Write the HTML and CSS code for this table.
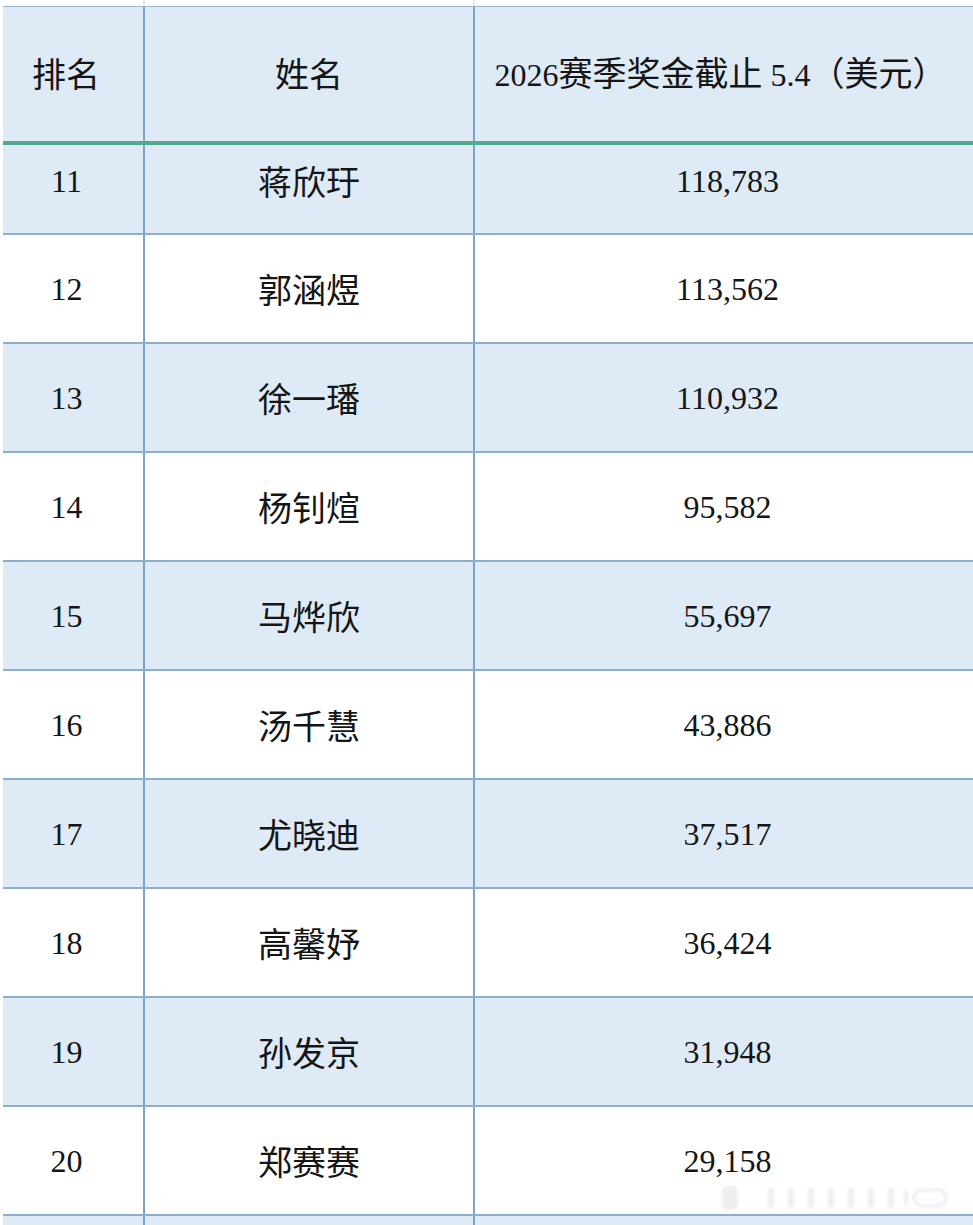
FILE: index.html
```html
<!DOCTYPE html>
<html lang="zh">
<head>
<meta charset="utf-8">
<title>2026赛季奖金</title>
<link rel="stylesheet" href="styles.css">
</head>
<body>
<div class="sheet">
  <div class="row strip"><div class="c c1"></div><div class="c c2"></div><div class="c c3"></div></div>
  <div class="row head">
    <div class="c c1"><span class="zh">排名</span></div>
    <div class="c c2"><span class="zh">姓名</span></div>
    <div class="c c3"><span>2026<span class="zh">赛季奖金截止</span> 5.4<span class="zh">（美元）</span></span></div>
  </div>
  <div class="row band first"><div class="c c1">11</div><div class="c c2 zh">蒋欣玗</div><div class="c c3">118,783</div></div>
  <div class="row"><div class="c c1">12</div><div class="c c2 zh">郭涵煜</div><div class="c c3">113,562</div></div>
  <div class="row band"><div class="c c1">13</div><div class="c c2 zh">徐一璠</div><div class="c c3">110,932</div></div>
  <div class="row"><div class="c c1">14</div><div class="c c2 zh">杨钊煊</div><div class="c c3">95,582</div></div>
  <div class="row band"><div class="c c1">15</div><div class="c c2 zh">马烨欣</div><div class="c c3">55,697</div></div>
  <div class="row"><div class="c c1">16</div><div class="c c2 zh">汤千慧</div><div class="c c3">43,886</div></div>
  <div class="row band"><div class="c c1">17</div><div class="c c2 zh">尤晓迪</div><div class="c c3">37,517</div></div>
  <div class="row"><div class="c c1">18</div><div class="c c2 zh">高馨妤</div><div class="c c3">36,424</div></div>
  <div class="row band"><div class="c c1">19</div><div class="c c2 zh">孙发京</div><div class="c c3">31,948</div></div>
  <div class="row"><div class="c c1">20</div><div class="c c2 zh">郑赛赛</div><div class="c c3">29,158</div></div>
  <div class="row band last"><div class="c c1"></div><div class="c c2"></div><div class="c c3"></div></div>
</div>
<svg class="watermark" width="250" height="32" viewBox="0 0 250 32">
  <defs><filter id="b"><feGaussianBlur stdDeviation="1.8"/></filter></defs>
  <g filter="url(#b)" fill="#cfcfcf" opacity="0.35">
    <rect x="14" y="4" width="16" height="24" rx="5"/>
    <rect x="60" y="6" width="6" height="20" rx="3"/>
    <rect x="80" y="6" width="6" height="20" rx="3"/>
    <rect x="100" y="6" width="6" height="20" rx="3"/>
    <rect x="120" y="6" width="6" height="20" rx="3"/>
    <rect x="140" y="6" width="6" height="20" rx="3"/>
    <rect x="160" y="6" width="6" height="20" rx="3"/>
    <rect x="180" y="6" width="6" height="20" rx="3"/>
    <rect x="196" y="8" width="4" height="16" rx="2"/>
    <rect x="206" y="8" width="32" height="16" rx="8" fill="none" stroke="#cfcfcf" stroke-width="3"/>
  </g>
</svg>
</body>
</html>
```

FILE: styles.css
```css
html, body {
  margin: 0;
  padding: 0;
  background: #ffffff;
  overflow: hidden;
}

body {
  position: relative;
  width: 973px;
  height: 1225px;
  font-family: "Liberation Serif", "Noto Sans CJK SC", serif;
  font-size: 32px;
  color: #151515;
}

.zh {
  font-family: "Noto Sans CJK SC", sans-serif;
  font-size: 34px;
}

.sheet {
  padding-left: 3px;
  width: 980px;
}

.row {
  display: grid;
  grid-template-columns: 142px 330px 505px;
  height: 109px;
  border-bottom: 2px solid #8eafcb;
  box-sizing: border-box;
  background: #ffffff;
}

.row.band {
  background: #deeaf6;
}

.c {
  display: flex;
  align-items: center;
  justify-content: center;
  border-right: 2px solid #7fa3c4;
  box-sizing: border-box;
  line-height: 1;
  white-space: nowrap;
}

.c1 {
  padding-right: 13px;
}

.c3 {
  border-right: none;
}

.row.strip {
  height: 7px;
  background: #ffffff;
  border-bottom: 1px solid #98b6cf;
}

.row.strip .c {
  border-right: 2px solid #e2e6ea;
}

.row.strip .c3 {
  border-right: none;
}

.row.head {
  height: 138px;
  background: #deeaf6;
  border-bottom: 4px solid #52ab8c;
}

.row.head .c {
  padding-bottom: 2px;
}

.row.head .c1 {
  padding-right: 14px;
}

.row.head .c3 {
  padding-right: 14px;
}

.row.first {
  height: 90px;
}

.row.first .c {
  padding-bottom: 16px;
}

.row.last {
  height: 10px;
  border-bottom: none;
}

.watermark {
  position: absolute;
  left: 708px;
  top: 1182px;
}
```
